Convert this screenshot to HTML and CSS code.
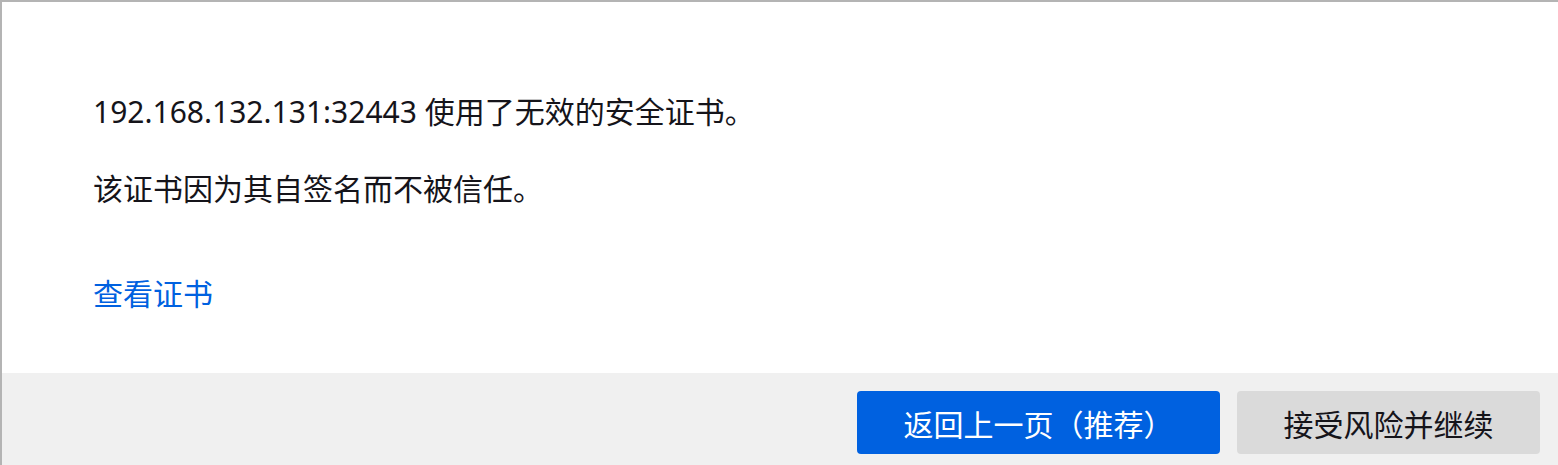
FILE: index.html
```html
<!DOCTYPE html>
<html lang="zh-CN">
<head>
<meta charset="utf-8">
<title>警告：潜在的安全风险</title>
<link rel="stylesheet" href="styles.css">
</head>
<body>
<div class="panel">
  <div class="content">
    <p class="line first">192.168.132.131:32443 使用了无效的安全证书。</p>
    <p class="line second">该证书因为其自签名而不被信任。</p>
    <a class="link" href="#">查看证书</a>
  </div>
  <div class="footer">
    <button class="btn primary">返回上一页（推荐）</button>
    <button class="btn secondary">接受风险并继续</button>
  </div>
</div>
</body>
</html>
```
FILE: styles.css
```css
html, body {
  margin: 0;
  padding: 0;
  background: #ffffff;
}
body {
  font-family: "Noto Sans", "Noto Sans CJK SC", sans-serif;
  color: #15141a;
  width: 1558px;
  height: 465px;
  overflow: hidden;
}
.panel {
  box-sizing: border-box;
  height: 465px;
  border-top: 2px solid #b4b4b4;
  border-left: 2px solid #b4b4b4;
  display: flex;
  flex-direction: column;
}
.content {
  flex: 1;
  padding: 90px 0 0 91px;
  display: flex;
  flex-direction: column;
  align-items: flex-start;
}
.line {
  margin: 0;
  font-size: 30px;
  line-height: 40px;
}
.second {
  margin-top: 37px;
}
.link {
  margin-top: 65px;
  font-size: 30px;
  line-height: 40px;
  color: #0061e0;
  text-decoration: none;
}
.footer {
  height: 92px;
  box-sizing: border-box;
  background: #f0f0f0;
  display: flex;
  justify-content: flex-end;
  align-items: flex-start;
  gap: 17px;
  padding: 18px 18px 0 0;
}
.btn {
  font-family: "Noto Sans", "Noto Sans CJK SC", sans-serif;
  font-size: 30px;
  height: 63px;
  border: none;
  border-radius: 4px;
  padding: 0;
  cursor: pointer;
}
.primary {
  background: #0061e0;
  color: #ffffff;
  width: 363px;
}
.secondary {
  background: #dadada;
  color: #15141a;
  width: 303px;
}
```
